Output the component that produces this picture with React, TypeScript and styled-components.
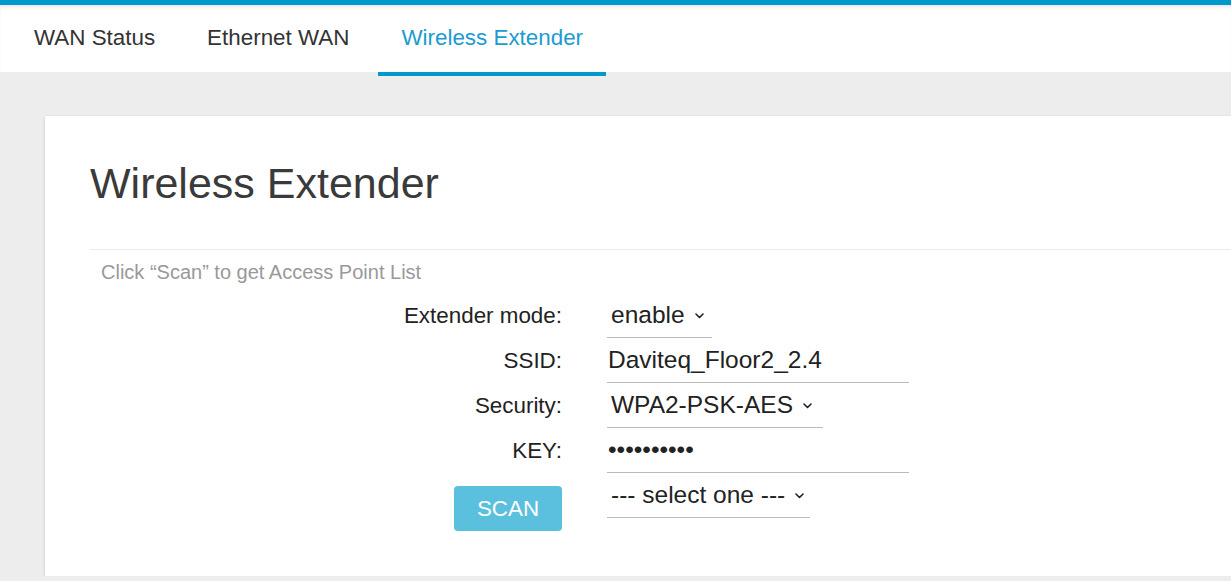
import { FC } from 'react';
import styled, { createGlobalStyle } from 'styled-components';

const GlobalStyle = createGlobalStyle`
  html, body {
    margin: 0;
    padding: 0;
    background: #ededed;
    font-family: "Liberation Sans", Arial, Helvetica, sans-serif;
    overflow: hidden;
  }
  * {
    box-sizing: border-box;
  }
`;

const Chevron: FC = () => (
  <svg width="9" height="6" viewBox="0 0 9 6" fill="none">
    <polyline points="1,1 4.5,4.5 8,1" stroke="#222" strokeWidth="1.6" strokeLinecap="round" strokeLinejoin="round" />
  </svg>
);

const App: FC = () => {
  return (
    <>
      <GlobalStyle />
      <Header>
        <Tabs>
          <Tab>WAN Status</Tab>
          <Tab>Ethernet WAN</Tab>
          <Tab $active>Wireless Extender</Tab>
        </Tabs>
      </Header>
      <Main>
        <Card>
          <Title>Wireless Extender</Title>
          <Divider />
          <Hint>Click “Scan” to get Access Point List</Hint>
          <Form>
            <Label>Extender mode:</Label>
            <Select $width={105}>
              <span>enable</span>
              <Chevron />
            </Select>

            <Label>SSID:</Label>
            <TextInput type="text" defaultValue="Daviteq_Floor2_2.4" />

            <Label>Security:</Label>
            <Select $width={216}>
              <span>WPA2-PSK-AES</span>
              <Chevron />
            </Select>

            <Label>KEY:</Label>
            <TextInput type="password" defaultValue="0123456789" />

            <ButtonCell>
              <ScanButton type="button">SCAN</ScanButton>
            </ButtonCell>
            <Select $width={203}>
              <span>--- select one ---</span>
              <Chevron />
            </Select>
          </Form>
        </Card>
      </Main>
    </>
  );
};

export default App;

const Header = styled.header`
  height: 72px;
  background: #fff;
  border-top: 5px solid #0099cc;
  box-shadow: inset 0 4px 4px -2px rgba(0, 0, 0, 0.1);
`;

const Tabs = styled.nav`
  display: flex;
  height: 100%;
  padding-left: 11px;
  gap: 6px;
`;

const Tab = styled.a<{ $active?: boolean }>`
  position: relative;
  display: flex;
  align-items: center;
  padding: 0 23px 2px;
  font-size: 22.4px;
  color: ${({ $active }) => ($active ? '#1b9bd1' : '#333')};
  cursor: pointer;

  &::after {
    content: '';
    display: ${({ $active }) => ($active ? 'block' : 'none')};
    position: absolute;
    left: 0;
    right: 0;
    bottom: -4px;
    height: 4px;
    background: #0099cc;
  }
`;

const Main = styled.main`
  padding: 44px 0 0 45px;
`;

const Card = styled.section`
  margin-right: -40px;
  background: #fff;
  padding: 43px 0 45px 45px;
  box-shadow: 0 1px 3px rgba(0, 0, 0, 0.18);
`;

const Title = styled.h1`
  margin: 0;
  font-size: 43px;
  line-height: 48px;
  font-weight: normal;
  color: #3a3a3a;
`;

const Divider = styled.hr`
  margin: 42px 0 0;
  border: 0;
  border-top: 1px solid #ebebeb;
`;

const Hint = styled.p`
  margin: 11px 0 0;
  padding-left: 11px;
  font-size: 20px;
  line-height: 22px;
  color: #999;
`;

const Form = styled.form`
  display: grid;
  grid-template-columns: 472px auto;
  grid-auto-rows: auto;
  column-gap: 45px;
  margin-top: 10px;
`;

const Label = styled.label`
  height: 45px;
  display: flex;
  align-items: center;
  justify-content: flex-end;
  font-size: 22.4px;
  color: #222;
`;

const Select = styled.div<{ $width: number }>`
  width: ${({ $width }) => $width}px;
  height: 45px;
  display: flex;
  align-items: center;
  gap: 10px;
  padding-left: 4px;
  font-size: 24.5px;
  color: #222;
  border-bottom: 1px solid #bbb;
  align-self: start;

  svg {
    flex: none;
    margin-top: 2px;
  }
`;

const TextInput = styled.input`
  width: 302px;
  height: 45px;
  padding: 0 0 0 1px;
  border: 0;
  border-bottom: 1px solid #bbb;
  outline: none;
  font-family: inherit;
  font-size: 24.5px;
  color: #222;
  background: transparent;
`;

const ButtonCell = styled.div`
  display: flex;
  justify-content: flex-end;
`;

const ScanButton = styled.button`
  width: 108px;
  height: 45px;
  margin-top: 13px;
  border: 0;
  border-radius: 4px;
  background: #5bc0de;
  color: #fff;
  font-family: inherit;
  font-size: 22.4px;
  cursor: pointer;
`;
